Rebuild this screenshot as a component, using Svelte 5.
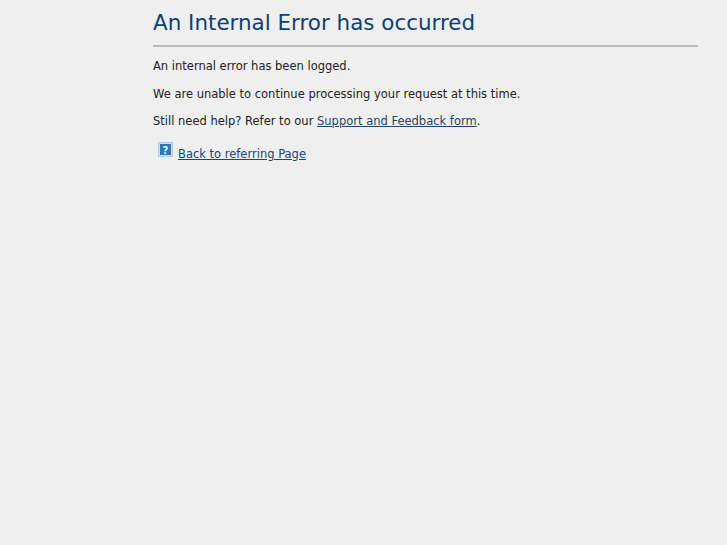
<script>
  const paragraphs = ["An internal error has been logged.", "We are unable to continue processing your request at this time."];
</script>

<div class="page">
  <h1>An Internal Error has occurred</h1>
  {#each paragraphs as p}
    <p>{p}</p>
  {/each}
  <p>Still need help? Refer to our <a href="#support">Support and Feedback form</a>.</p>
  <div class="back">
    <svg class="icon" width="15" height="15" viewBox="0 0 15 15" aria-hidden="true">
      <rect x="0.5" y="0.5" width="14" height="14" fill="#d3deea" stroke="#b9cadb" />
      <rect x="2" y="2" width="11" height="11" fill="#2a7ab8" />
      <text x="7.5" y="11.5" text-anchor="middle" class="q">?</text>
    </svg>
    <a href="#back">Back to referring Page</a>
  </div>
</div>

<style>
  :global(body) {
    margin: 0;
    background: #efefef;
  }
  .page {
    box-sizing: border-box;
    min-height: 545px;
    margin-left: 153px;
    width: 545px;
    font-family: "DejaVu Sans", sans-serif;
    font-size: 11.5px;
    line-height: 15.5px;
    color: #222;
    overflow: hidden;
  }
  h1 {
    margin: 8px 0 12px;
    padding-bottom: 8px;
    border-bottom: 2px solid #bbb;
    font-size: 21.45px;
    line-height: 29px;
    font-weight: normal;
    color: #0f3f73;
  }
  p {
    margin: 0 0 12px;
  }
  a {
    color: #1a4672;
    text-decoration: underline;
  }
  .back {
    display: flex;
    align-items: flex-start;
    gap: 5px;
    padding-left: 5px;
  }
  .icon {
    flex: none;
    margin-top: 0.5px;
  }
  .back a {
    margin-top: 5px;
  }
  .q {
    font-family: "DejaVu Sans", sans-serif;
    font-size: 10px;
    font-weight: bold;
    fill: #e6f0f8;
  }
</style>
